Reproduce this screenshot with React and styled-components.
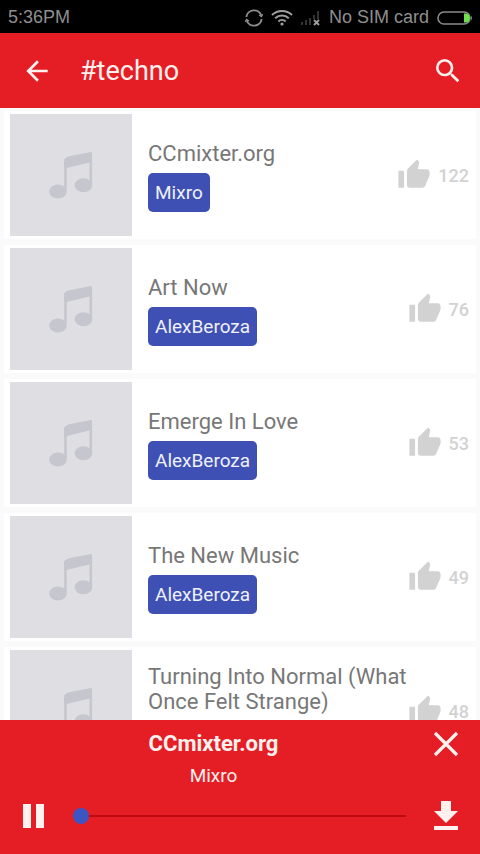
import styled, { createGlobalStyle } from 'styled-components'
import { MdArrowBack, MdSearch, MdThumbUp } from 'react-icons/md'

const GlobalStyle = createGlobalStyle`
    * {
        box-sizing:border-box;
    }
    body {
        margin:0;
        background-color:#fafafa;
        font-family:Roboto, sans-serif;
    }
`

const Container = styled.div`
    display:flex;
    flex-direction:column;
    height:100vh;
    overflow:hidden;
`

const StatusBar = styled.div`
    display:flex;
    align-items:center;
    justify-content:space-between;
    flex-shrink:0;
    height:33px;
    padding:2px 7px 0 8px;
    background-color:black;
    color:#8f8f8f;
    font-family:"Liberation Sans", sans-serif;
    font-size:18px;
`

const StatusIcons = styled.div`
    display:flex;
    align-items:center;
    gap:8px;
`

const AppBar = styled.header`
    display:flex;
    align-items:center;
    flex-shrink:0;
    height:75px;
    padding:0 16px 0 21px;
    background-color:#e51d25;
    color:#fff1ee;
`

const Heading = styled.h1`
    flex:1;
    margin:0 0 0 27px;
    font-size:27px;
    font-weight:400;
    line-height:30px;
`

const IconButton = styled.button`
    display:flex;
    align-items:center;
    justify-content:center;
    width:32px;
    height:32px;
    padding:0;
    border:none;
    background:none;
    color:inherit;
    cursor:pointer;
`

const TrackList = styled.ul`
    display:flex;
    flex-direction:column;
    gap:6px;
    flex:1;
    min-height:0;
    margin:0;
    padding:3px 4px;
    overflow-y:auto;
    scrollbar-width:none;
    list-style:none;
`

const Track = styled.li`
    display:flex;
    align-items:center;
    flex-shrink:0;
    padding:3px 7px 3px 6px;
    background-color:white;
`

const Cover = styled.div`
    flex-shrink:0;
    width:122px;
    height:122px;
    background-color:#dedee3;
`

const Info = styled.div`
    display:flex;
    flex-direction:column;
    align-items:flex-start;
    gap:7px;
    flex:1;
    min-width:0;
    padding:2px 0 0 16px;
`

const TrackName = styled.span`
    color:#777;
    font-size:22px;
    line-height:25px;
`

const Artist = styled.a`
    min-height:39px;
    padding:0 7px;
    border-radius:5px;
    background-color:#3e50b4;
    color:#eff1fb;
    font-size:19px;
    line-height:39px;
    text-decoration:none;
`

const Likes = styled.button`
    display:flex;
    align-items:center;
    gap:7px;
    padding:0;
    border:none;
    background:none;
    color:#d2d2d2;
    font-family:inherit;
    font-size:18px;
    font-weight:500;
    cursor:pointer;
`

const Player = styled.footer`
    display:grid;
    grid-template-columns:32px 1fr 32px;
    grid-template-rows:47px 18px 62px;
    column-gap:20px;
    align-items:center;
    flex-shrink:0;
    height:134px;
    padding:0 18px 0 17px;
    background-color:#e51d25;
    color:#fff1ee;
`

const NowPlaying = styled.strong`
    grid-column:1 / 3;
    justify-self:center;
    font-size:22px;
    font-weight:700;
    line-height:26px;
`

const NowArtist = styled.span`
    grid-column:1 / 3;
    justify-self:center;
    font-size:19px;
    line-height:22px;
`

const SeekBox = styled.div`
    display:flex;
    padding:0 4px;
`

const Seek = styled.input`
    appearance:none;
    width:100%;
    height:16px;
    margin:0;
    background:linear-gradient(#bf0a12, #bf0a12) center / 100% 2px no-repeat;
    cursor:pointer;

    &::-webkit-slider-thumb {
        appearance:none;
        width:16px;
        height:16px;
        border-radius:50%;
        background-color:#3c55c0;
    }
`

const tracks = [
  { name: 'CCmixter.org', artist: 'Mixro', likes: 122 },
  { name: 'Art Now', artist: 'AlexBeroza', likes: 76 },
  { name: 'Emerge In Love', artist: 'AlexBeroza', likes: 53 },
  { name: 'The New Music', artist: 'AlexBeroza', likes: 49 },
  { name: 'Turning Into Normal (What Once Felt Strange)', artist: '', likes: 48 },
]

const SyncIcon = () => (
  <svg width="18" height="18" viewBox="0 0 18 18" fill="none" stroke="#8f8f8f" strokeWidth="1.8">
    <path d="M1.3 8A7.8 7.8 0 0 1 16.4 6.6M16.7 10A7.8 7.8 0 0 1 1.6 11.4" />
    <path d="M0 13l1.6-2.6L4 12M18 5l-1.6 2.6L14 6" strokeWidth="1.2" />
  </svg>
)

const WifiIcon = () => (
  <svg width="22" height="17" viewBox="0 0 22 17" fill="none" stroke="#a0a0a0" strokeWidth="2">
    <path d="M1 6a14.5 14.5 0 0 1 20 0M4.2 9.3a9.8 9.8 0 0 1 13.6 0M7.4 12.4a5.3 5.3 0 0 1 7.2 0" />
    <circle cx="11" cy="15" r="1.6" fill="#a0a0a0" stroke="none" />
  </svg>
)

const SignalIcon = () => (
  <svg width="20" height="16" viewBox="0 0 20 16">
    <path d="M0 12h2v3H0zM4 10h2v5H4zM8 8h2v7H8zM12 5h2v4h-2zM16 1h2v8h-2z" fill="#333" />
    <path d="M13 10l5 5M18 10l-5 5" stroke="#a0a0a0" strokeWidth="1.8" />
  </svg>
)

const BatteryIcon = () => (
  <svg width="36" height="16" viewBox="0 0 36 16">
    <rect x="1" y="2" width="32" height="12" rx="6" fill="none" stroke="#8a8a8a" strokeWidth="1.6" />
    <path d="M27 3.5h1.5a4.5 4.5 0 0 1 0 9H27z" fill="#6fe04c" />
    <path d="M34 5.5q2 2.5 0 5z" fill="#8a8a8a" />
  </svg>
)

const NoteIcon = () => (
  <svg width="122" height="122" viewBox="0 0 122 122" fill="#c6c6ce" stroke="#c6c6ce">
    <path d="M54.5 45.5Q56 43.5 60 42.5L81.5 38.5V47.5L54.5 54z" strokeWidth="1" />
    <path d="M55.5 50V76M80.8 42V70" strokeWidth="2.6" />
    <ellipse cx="48" cy="77.5" rx="8.8" ry="7" stroke="none" />
    <ellipse cx="73.5" cy="71.3" rx="8.8" ry="7" stroke="none" />
  </svg>
)

const CloseIcon = () => (
  <svg width="26" height="26" viewBox="0 0 26 26" stroke="currentColor" strokeWidth="3.2">
    <path d="M2 2l22 22M24 2L2 24" />
  </svg>
)

const PauseIcon = () => (
  <svg width="22" height="26" viewBox="0 0 22 26" fill="currentColor">
    <path d="M1 1h8v24H1zM14 1h8v24h-8z" />
  </svg>
)

const DownloadIcon = () => (
  <svg width="26" height="32" viewBox="0 0 26 32" fill="currentColor">
    <path d="M8 1h10v10h7L13 23 1 11h7zM1 26h24v4H1z" />
  </svg>
)

const App = () => {
  return (
    <Container>
      <GlobalStyle />
      <StatusBar>
        <span>5:36PM</span>
        <StatusIcons>
          <SyncIcon />
          <WifiIcon />
          <SignalIcon />
          <span>No SIM card</span>
          <BatteryIcon />
        </StatusIcons>
      </StatusBar>
      <AppBar>
        <IconButton aria-label="Back"><MdArrowBack size={32} /></IconButton>
        <Heading>#techno</Heading>
        <IconButton aria-label="Search"><MdSearch size={32} /></IconButton>
      </AppBar>
      <TrackList>
        {tracks.map((track) => (
          <Track key={track.name}>
            <Cover><NoteIcon /></Cover>
            <Info>
              <TrackName>{track.name}</TrackName>
              <Artist href="#artist">{track.artist}</Artist>
            </Info>
            <Likes aria-label={`Like ${track.name}`}>
              <MdThumbUp size={34} />
              {track.likes}
            </Likes>
          </Track>
        ))}
      </TrackList>
      <Player>
        <NowPlaying>CCmixter.org</NowPlaying>
        <IconButton aria-label="Close"><CloseIcon /></IconButton>
        <NowArtist>Mixro</NowArtist>
        <span />
        <IconButton aria-label="Pause"><PauseIcon /></IconButton>
        <SeekBox>
          <Seek type="range" min="0" max="100" defaultValue="0" aria-label="Seek" />
        </SeekBox>
        <IconButton aria-label="Download"><DownloadIcon /></IconButton>
      </Player>
    </Container>
  )
}

export default App
